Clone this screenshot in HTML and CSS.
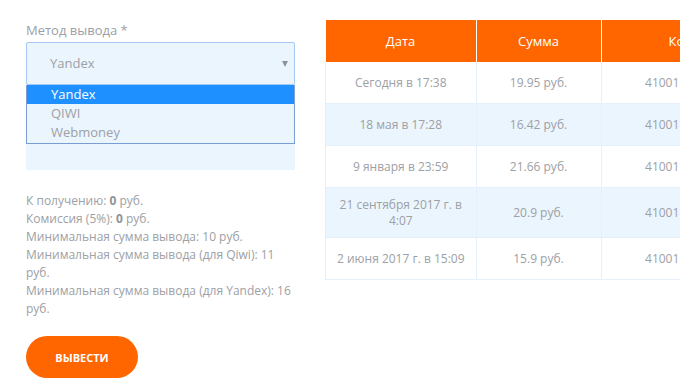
FILE: index.html
```html
<!DOCTYPE html>
<html lang="ru">
<head>
  <meta charset="UTF-8">
  <title>Вывод средств</title>
  <link rel="stylesheet" href="styles.css">
</head>
<body>
  <div class="page">
    <div class="form">
      <label class="label">Метод вывода *</label>
      <div class="select-wrap">
        <div class="select">Yandex<span class="arrow"></span></div>
        <ul class="options">
          <li class="active">Yandex</li>
          <li>QIWI</li>
          <li>Webmoney</li>
        </ul>
      </div>
      <div class="input"></div>
      <div class="info">
        <p>К получению: <b>0</b> руб.</p>
        <p>Комиссия (5%): <b>0</b> руб.</p>
        <p>Минимальная сумма вывода: 10 руб.</p>
        <p>Минимальная сумма вывода (для Qiwi): 11 руб.</p>
        <p>Минимальная сумма вывода (для Yandex): 16 руб.</p>
      </div>
      <button class="btn">Вывести</button>
    </div>

    <table class="history">
      <thead>
        <tr><th class="c1">Дата</th><th class="c2">Сумма</th><th class="c3">Кошелек</th><th class="c4">Статус</th></tr>
      </thead>
      <tbody>
        <tr><td>Сегодня в 17:38</td><td>19.95 руб.</td><td>410011234567890</td><td>Выполнено</td></tr>
        <tr><td>18 мая в 17:28</td><td>16.42 руб.</td><td>410011234567890</td><td>Выполнено</td></tr>
        <tr><td>9 января в 23:59</td><td>21.66 руб.</td><td>410011234567890</td><td>Выполнено</td></tr>
        <tr><td>21 сентября 2017 г. в 4:07</td><td>20.9 руб.</td><td>410011234567890</td><td>Выполнено</td></tr>
        <tr><td>2 июня 2017 г. в 15:09</td><td>15.9 руб.</td><td>410011234567890</td><td>Выполнено</td></tr>
      </tbody>
    </table>
  </div>
</body>
</html>
```

FILE: styles.css
```css
html, body { margin: 0; background: #fff; overflow: hidden; }
body { font-family: "Open Sans", "Liberation Sans", sans-serif; color: #9da0a5; }
.page { display: flex; align-items: flex-start; gap: 30px; padding: 20px 0 0 26px; width: 1000px; }

.form { width: 269px; flex: none; padding-top: 1px; }
.label { display: block; font-size: 13px; line-height: 18px; margin-bottom: 3px; }
.select-wrap { position: relative; }
.select {
  height: 41px; line-height: 41px; padding-left: 23px; font-size: 13px;
  background: #ebf5fe; border: 1px solid #a6c6f4; border-radius: 2px; position: relative;
}
.arrow {
  position: absolute; right: 6px; top: 18px;
  border-left: 3px solid transparent; border-right: 3px solid transparent; border-top: 6px solid #8e9298;
}
.options {
  position: absolute; left: 0; right: 0; top: 43px; z-index: 2;
  list-style: none; margin: 0; padding: 0 0 1px;
  background: #ebf5fe; border: 1px solid #7c9dd3; border-top: 0;
  font-size: 13px; line-height: 19px;
}
.options li { padding-left: 24px; }
.options li.active { background: #1e90ff; color: #fff; }
.input { height: 42px; background: #ebf5fe; margin-top: 43px; }

.info { margin-top: 22px; font-size: 12px; line-height: 18px; }
.info p { margin: 0; }
.info b { font-weight: 700; color: #8f9297; }

.btn {
  margin-top: 18px; width: 112px; height: 42px; border: 0; border-radius: 21px;
  background: #ff6600; color: #fff; font-family: inherit; font-size: 11px; font-weight: 700;
  text-transform: uppercase; cursor: pointer;
}

.history { border-collapse: collapse; flex: none; font-size: 12px; }
.history th {
  background: #ff6600; color: #fff; font-weight: 400; font-size: 13px;
  height: 42px; padding: 0 10px; border-left: 1px solid #fff;
}
.history th:first-child { border-left: 0; }
.c1 { width: 130px; }
.c2 { width: 104px; }
.c3 { width: 170px; }
.c4 { width: 120px; }
.history td {
  height: 24px; padding: 9px 10px 8px; line-height: 16px; text-align: center;
  border: 1px solid #e4f0fb; border-top: 0;
}
.history tbody tr:nth-child(even) td { background: #ebf5fe; }
```
